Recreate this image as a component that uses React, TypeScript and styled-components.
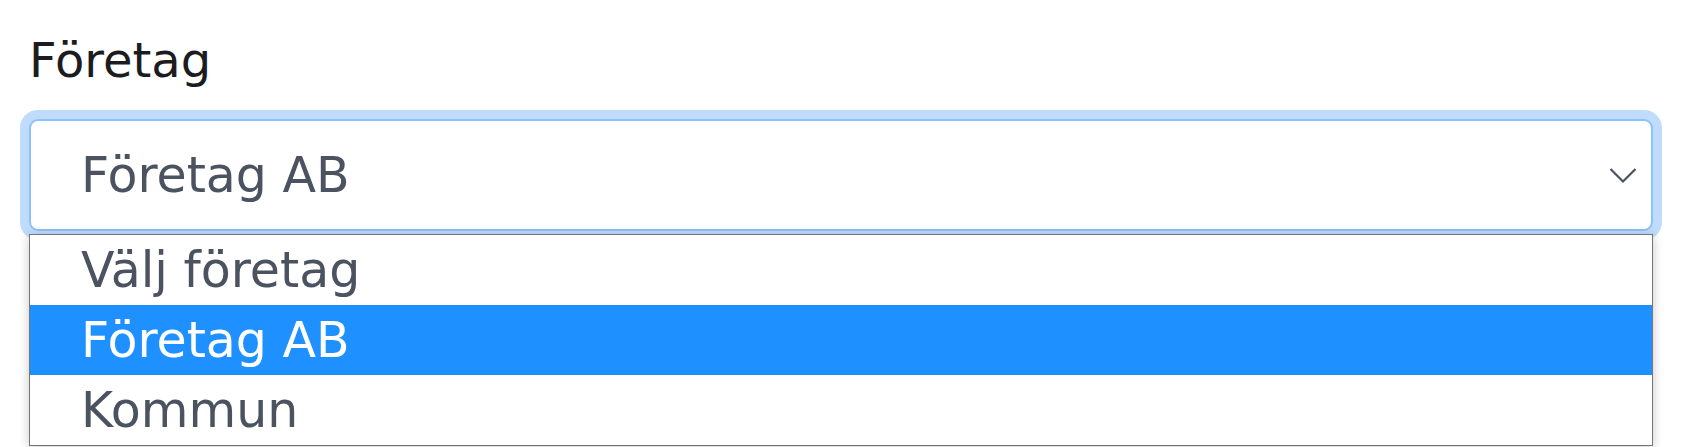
import styled, { createGlobalStyle } from 'styled-components';

const GlobalStyle = createGlobalStyle`
    html {
        overflow: hidden;
    }

    body {
        margin: 0;
        padding: 0;
        background: #ffffff;
        font-family: 'DejaVu Sans', 'Liberation Sans', sans-serif;
    }
`;

const Page = styled.div`
    min-height: 447px;
    padding: 32px 32px 0 29px;
    box-sizing: border-box;
`;

const Label = styled.label`
    display: block;
    margin: 0 0 31px 0;
    font-size: 48px;
    line-height: 56px;
    color: #1c1c1e;
`;

const Field = styled.div`
    position: relative;
`;

const SelectBox = styled.div`
    display: flex;
    align-items: center;
    justify-content: space-between;
    box-sizing: border-box;
    height: 112px;
    padding: 0 14px 0 50px;
    border: 2px solid #8ec0fb;
    border-radius: 9px;
    box-shadow: 0 0 0 9px #bfdcfd;
    background: #ffffff;
    font-size: 49px;
    color: #4b5260;
`;

const Chevron = styled.svg`
    width: 28px;
    height: 17px;
    flex-shrink: 0;
`;

const Listbox = styled.ul`
    position: absolute;
    top: 115px;
    left: 0;
    right: 0;
    margin: 0;
    padding: 0;
    list-style: none;
    background: #ffffff;
    border: 1px solid #767676;
    box-shadow: 0 2px 10px rgba(0, 0, 0, 0.22);
`;

const Option = styled.li<{ active?: boolean }>`
    display: flex;
    align-items: center;
    height: 70px;
    padding-left: 51px;
    font-size: 49px;
    background: ${(props) => (props.active ? '#1e90ff' : 'transparent')};
    color: ${(props) => (props.active ? '#ffffff' : '#4b5260')};
`;

const options = ['Välj företag', 'Företag AB', 'Kommun'];

const App = () => {
    const selected = 'Företag AB';

    return (
        <>
            <GlobalStyle />
            <Page>
                <Label>Företag</Label>
                <Field>
                    <SelectBox>
                        <span>{selected}</span>
                        <Chevron viewBox="0 0 28 17" fill="none">
                            <path
                                d="M1.5 2 L14 14.5 L26.5 2"
                                stroke="#4b5260"
                                strokeWidth="2.2"
                            />
                        </Chevron>
                    </SelectBox>
                    <Listbox>
                        {options.map((o, i) => (
                            <Option key={i} active={o === selected}>
                                {o}
                            </Option>
                        ))}
                    </Listbox>
                </Field>
            </Page>
        </>
    );
};

export default App;
